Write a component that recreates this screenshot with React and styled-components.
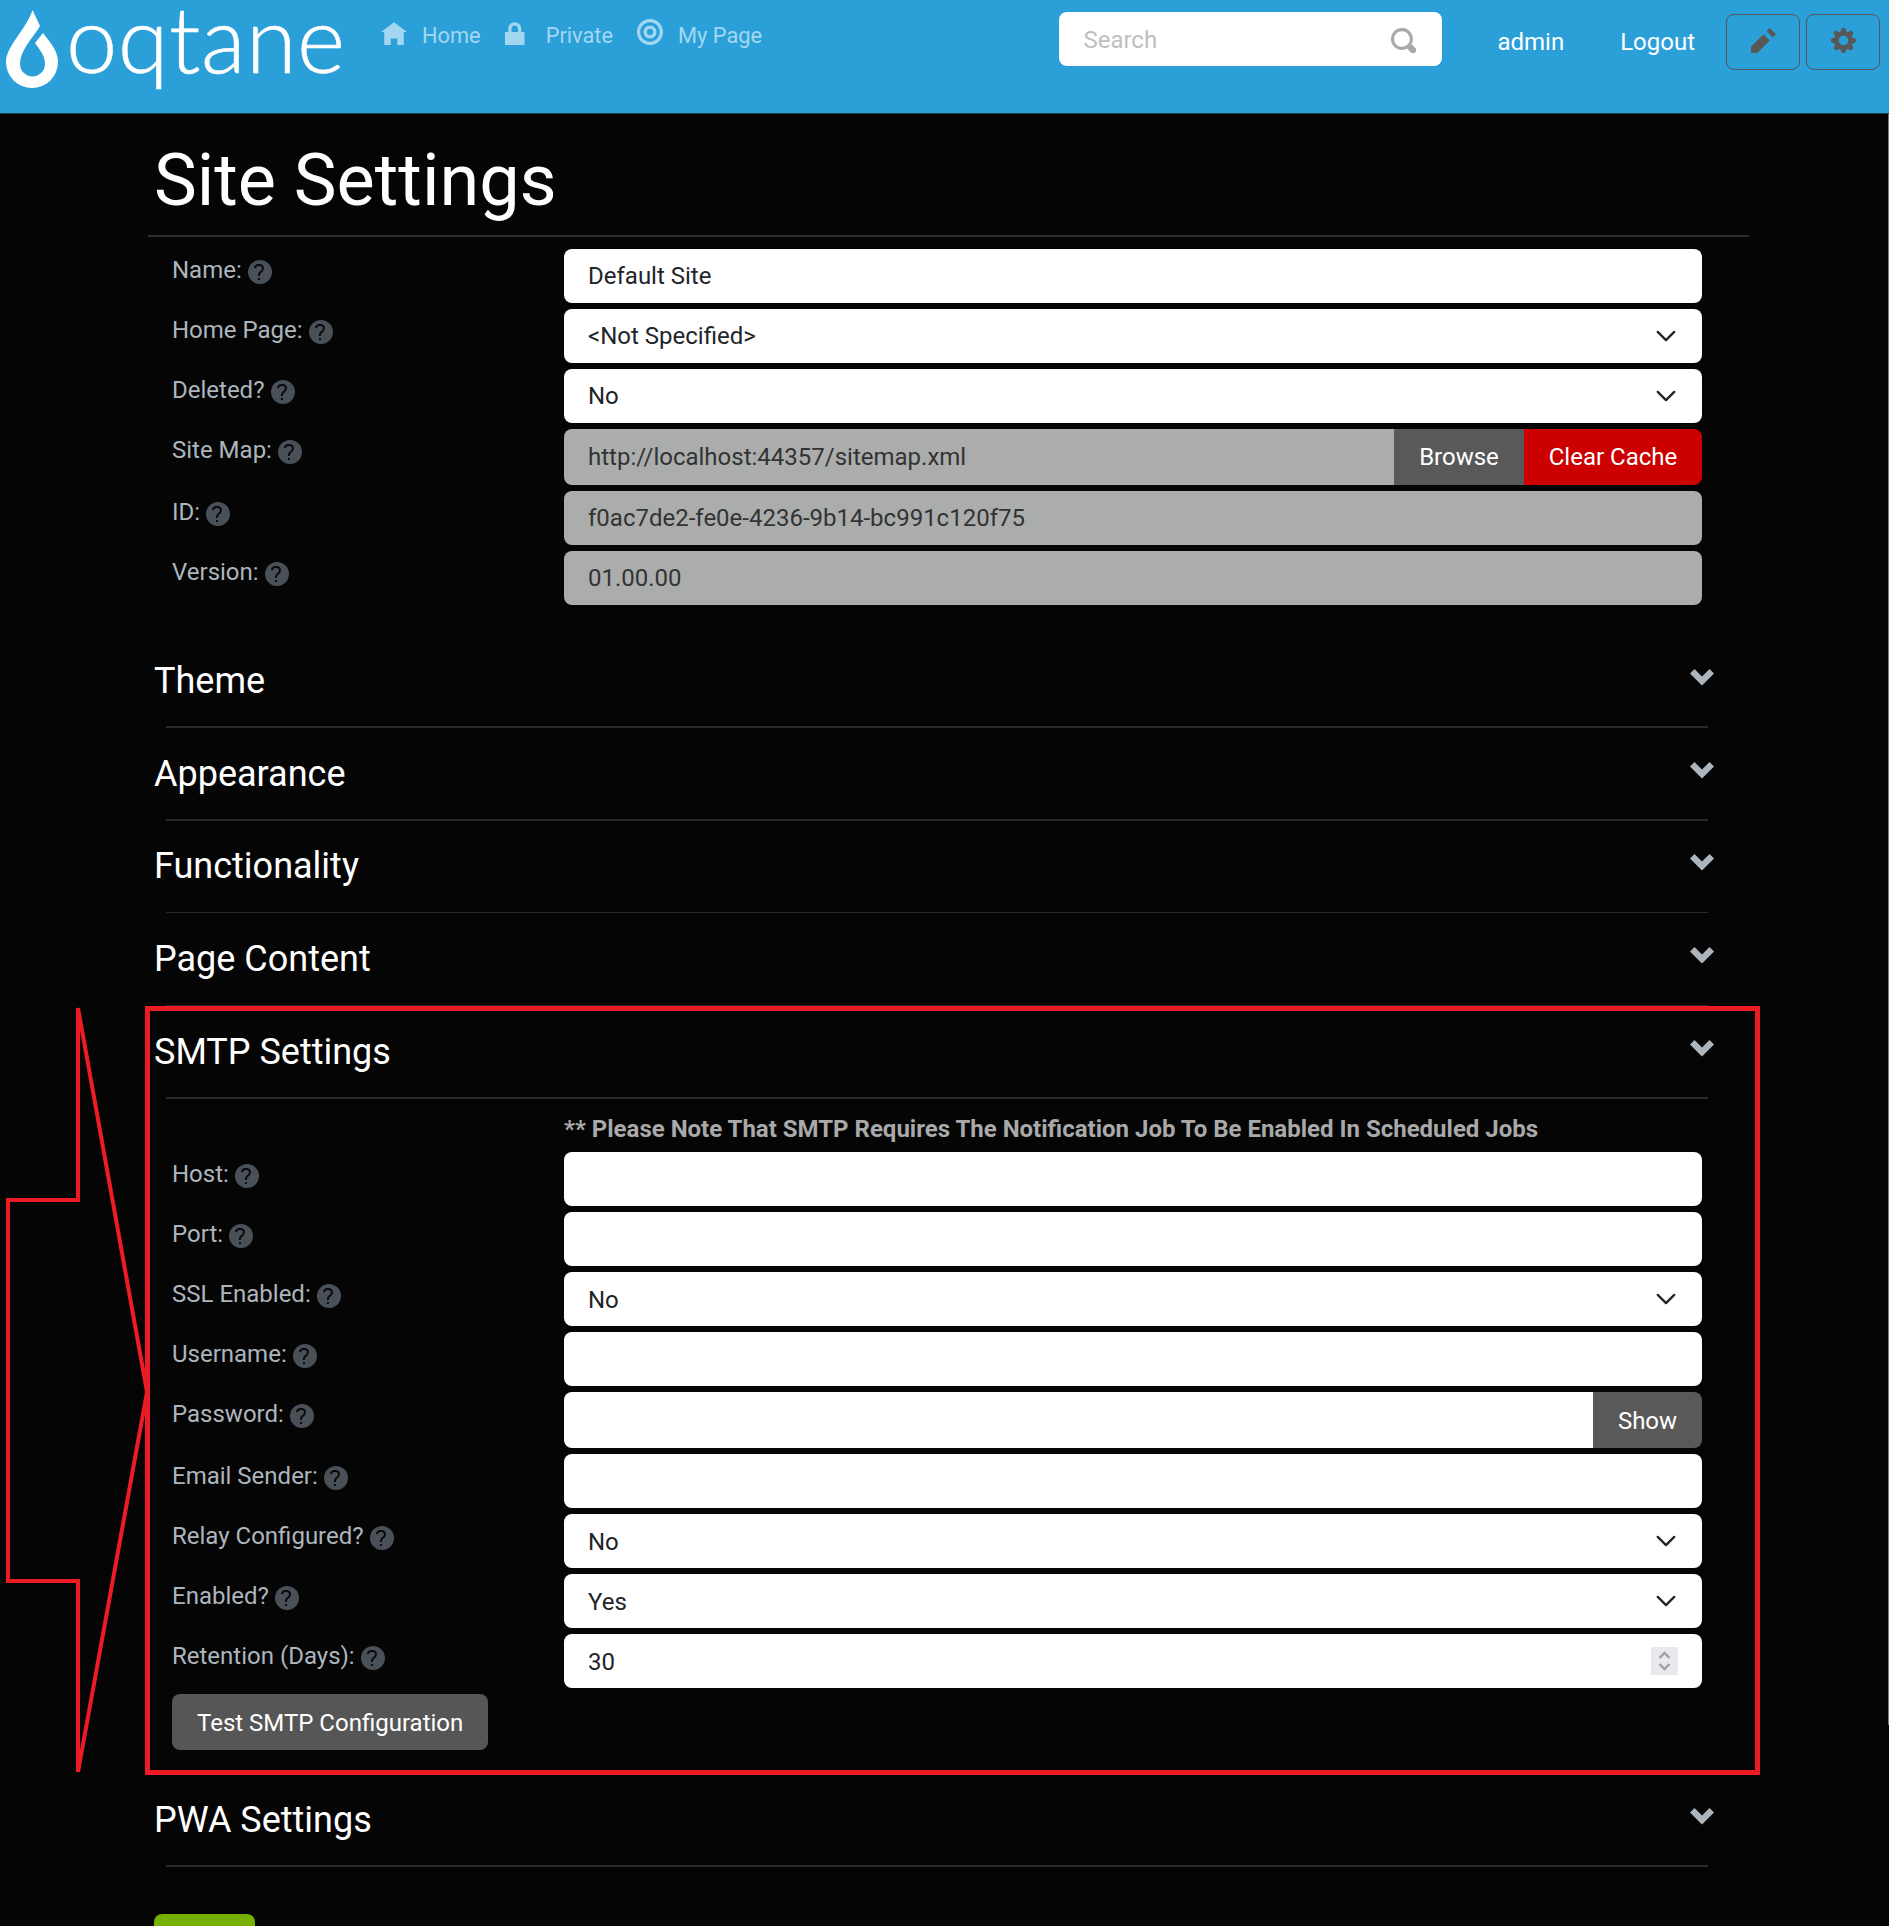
import styled, { createGlobalStyle } from 'styled-components';

const GlobalStyle = createGlobalStyle`
  html, body {
    margin: 0;
    padding: 0;
    height: 1926px;
    overflow: hidden;
    background: #050505;
  }
  * { box-sizing: border-box; }
  body {
    font-family: Roboto, "Liberation Sans", sans-serif;
    font-size: 24px;
    color: #212529;
  }
`;

const Page = styled.div`
  position: relative;
  height: 1926px;
  overflow: hidden;
  background: #050505;
`;

/* header */
const Header = styled.header`
  height: 114px;
  display: flex;
  align-items: flex-start;
  background: #2ba0d8;
  border-bottom: 1px solid #1d3a48;
  padding-right: 9px;
`;

const Logo = styled.a`
  width: 381px;
  flex: none;
  height: 113px;
  display: flex;
  align-items: flex-start;
  color: #fff;
`;

const LogoDrop = styled.svg`
  width: 66px;
  height: 100px;
  flex: none;
`;

const LogoWord = styled.span`
  font-family: Lato, sans-serif;
  font-weight: 300;
  font-size: 92px;
  line-height: 92px;
  letter-spacing: 0.5px;
  margin: -8px 0 0 0;
  -webkit-text-stroke: 0.6px #fff;
`;

const NavList = styled.nav`
  display: flex;
  gap: 24px;
  padding-top: 19px;
`;

const NavItem = styled.a`
  display: flex;
  align-items: flex-start;
  gap: 15px;
  color: #a3d7f1;
  font-size: 21.8px;
  line-height: 34px;
`;

const NavIcon = styled.svg`
  height: 26px;
  width: 26px;
  fill: #a3d7f1;
  flex: none;
`;

const SearchBox = styled.div`
  width: 383px;
  height: 54px;
  margin: 12px 0 0 auto;
  padding: 1px 26px 0 24px;
  background: #fff;
  border-radius: 8px;
  display: flex;
  align-items: center;
  justify-content: space-between;
  color: #bfbfbf;
`;

const SearchIcon = styled.svg`
  width: 25px;
  height: 25px;
  fill: #a9a9a9;
  margin-top: 2px;
`;

const UserLink = styled.a`
  color: #fff;
  line-height: 36px;
  margin-top: 24px;
  margin-left: ${({ $gap }) => $gap}px;
`;

const ToolButton = styled.button`
  width: 74px;
  height: 56px;
  margin-top: 14px;
  margin-left: ${({ $gap }) => $gap}px;
  padding: 0 0 4px;
  background: transparent;
  border: 1px solid #555;
  border-radius: 8px;
  display: flex;
  align-items: center;
  justify-content: center;
`;

const ToolIcon = styled.svg`
  width: 25px;
  height: 25px;
  fill: #585858;
`;

/* content */
const Main = styled.main`
  width: 1601px;
  margin-left: 148px;
`;

const Title = styled.h1`
  margin: 0;
  padding: 24px 0 11px 6px;
  font-size: 72px;
  font-weight: 400;
  line-height: 86.4px;
  color: #fff;
  border-bottom: 2px solid #2e2e2e;
`;

/* --text-shift moves the text of a form down inside its controls */
const Form = styled.div`
  --text-shift: ${({ $shift }) => $shift || 0}px;
  display: flex;
  flex-direction: column;
  gap: 6px;
  margin-left: 24px;
  padding-top: ${({ $top }) => $top}px;
`;

const Row = styled.div`
  display: grid;
  grid-template-columns: 392px 1138px;
  align-items: start;
`;

const Label = styled.label`
  display: flex;
  align-items: flex-start;
  gap: 6px;
  padding-top: calc(3px + var(--text-shift) / 2);
  line-height: 36px;
  color: #adb5bd;
`;

const HelpBadge = styled.span`
  width: 24px;
  height: 24px;
  margin-top: 8px;
  border-radius: 50%;
  background: #495057;
  display: flex;
  align-items: center;
  justify-content: center;
`;

const HelpGlyph = styled.svg`
  width: 12px;
  height: 16px;
  fill: #0a0a0a;
`;

const Field = styled.div`
  height: 54px;
  padding: var(--text-shift) 24px 0;
  display: flex;
  align-items: center;
  justify-content: space-between;
  border-radius: 8px;
  background: ${({ $disabled }) => ($disabled ? '#abadac' : '#fff')};
  color: ${({ $disabled }) => ($disabled ? '#333' : '#212529')};
`;

const SelectArrow = styled.svg`
  width: 22px;
  height: 22px;
  margin-right: 1px;
  margin-bottom: var(--text-shift);
  fill: none;
  stroke: #212529;
  stroke-width: 1.7;
  stroke-linecap: round;
  stroke-linejoin: round;
`;

const Spinner = styled.span`
  width: 27px;
  height: 28px;
  margin-bottom: var(--text-shift);
  background: #e9e9ed;
  display: flex;
  align-items: center;
  justify-content: center;
`;

const SpinnerGlyph = styled.svg`
  width: 13px;
  height: 22px;
  fill: none;
  stroke: #a09fa8;
  stroke-width: 2.4;
`;

const InputGroup = styled.div`
  display: flex;
  height: 56px;
  border-radius: 8px;
  overflow: hidden;
`;

const GroupField = styled(Field)`
  flex: 1;
  height: 100%;
  border-radius: 0;
`;

const GroupButton = styled.button`
  width: ${({ $w }) => $w}px;
  flex: none;
  border: 0;
  padding: var(--text-shift) 0 0;
  font: inherit;
  color: #fff;
  background: ${({ $danger }) => ($danger ? '#cc0000' : '#595959')};
`;

const Note = styled.div`
  grid-column: 2;
  padding-top: 1px;
  font-weight: 700;
  line-height: 34px;
  color: #a9a9a9;
`;

const TestButton = styled.button`
  align-self: flex-start;
  height: 56px;
  padding: var(--text-shift) 25px 0;
  border: 0;
  border-radius: 8px;
  font: inherit;
  color: #fff;
  background: #565656;
`;

const SectionHead = styled.div`
  height: 91.25px;
  padding: 0 35px 0 6px;
  display: flex;
  align-items: center;
  justify-content: space-between;
  font-size: 36px;
  color: #fff;
  margin-top: ${({ $top }) => $top || 0}px;
`;

const SectionArrow = styled.svg`
  width: 24px;
  height: 24px;
  fill: #adb5bd;
  margin-bottom: 6px;
`;

const SectionRule = styled.hr`
  height: 1.5px;
  margin: 0 41px 0 18px;
  border: 0;
  background: #2a2a2a;
`;

const SaveButton = styled.button`
  display: block;
  width: 101px;
  height: 56px;
  margin: 47.5px 0 0 6px;
  border: 0;
  border-radius: 8px;
  background: #78b000;
`;

/* red annotation drawn over the screenshot */
const RedBox = styled.div`
  position: absolute;
  left: 145px;
  top: 1006px;
  width: 1615px;
  height: 769px;
  border: 5px solid #ed1c24;
  pointer-events: none;
`;

const RedArrow = styled.svg`
  position: absolute;
  left: 0;
  top: 1000px;
  width: 160px;
  height: 780px;
  fill: none;
  stroke: #ed1c24;
  stroke-width: 4;
  pointer-events: none;
`;

const EdgeLine = styled.div`
  position: absolute;
  right: 0;
  top: 114px;
  width: 1px;
  height: 1611px;
  background: #777;
`;

const icons = {
  home: 'M4 0l-4 3h1v4h2v-2h2v2h2v-4.03l1 .03-4-3z',
  lock: 'M3 0c-1.1 0-2 .9-2 2v1h-1v4h6v-4h-1v-1c0-1.1-.9-2-2-2zm0 1c.56 0 1 .44 1 1v1h-2v-1c0-.56.44-1 1-1z',
  target: 'M4 0c-2.2 0-4 1.8-4 4s1.8 4 4 4 4-1.8 4-4-1.8-4-4-4zm0 1c1.66 0 3 1.34 3 3s-1.34 3-3 3-3-1.34-3-3 1.34-3 3-3zm0 1c-1.1 0-2 .9-2 2s.9 2 2 2 2-.9 2-2-.9-2-2-2zm0 1c.56 0 1 .44 1 1s-.44 1-1 1-1-.44-1-1 .44-1 1-1z',
  pencil: 'M6 0l-1 1 2 2 1-1-2-2zm-2 2l-4 4v2h2l4-4-2-2z',
  cog: 'M3.5 0l-.5 1.19c-.1.03-.19.08-.28.13l-1.19-.5-.72.72.5 1.19c-.05.1-.09.18-.13.28l-1.19.5v1l1.19.5c.04.1.08.18.13.28l-.5 1.19.72.72 1.19-.5c.09.04.18.09.28.13l.5 1.19h1l.5-1.19c.09-.04.19-.08.28-.13l1.19.5.72-.72-.5-1.19c.04-.09.09-.19.13-.28l1.19-.5v-1l-1.19-.5c-.03-.09-.08-.19-.13-.28l.5-1.19-.72-.72-1.19.5c-.09-.04-.19-.09-.28-.13l-.5-1.19h-1zm.5 2.5c.83 0 1.5.67 1.5 1.5s-.67 1.5-1.5 1.5-1.5-.67-1.5-1.5.67-1.5 1.5-1.5z',
  search: 'M3.5 0c-1.93 0-3.5 1.57-3.5 3.5s1.57 3.5 3.5 3.5c.59 0 1.17-.14 1.66-.41a1 1 0 0 0 .13.13l1 1a1.02 1.02 0 1 0 1.44-1.44l-1-1a1 1 0 0 0-.16-.13c.27-.49.44-1.06.44-1.66 0-1.93-1.57-3.5-3.5-3.5zm0 1c1.39 0 2.5 1.11 2.5 2.5 0 .66-.24 1.27-.66 1.72-.01.01-.02.02-.03.03a1 1 0 0 0-.13.13c-.44.4-1.04.63-1.69.63-1.39 0-2.5-1.11-2.5-2.5s1.11-2.5 2.5-2.5z',
  chevron: 'M1.5 1l-1.5 1.5 4 4 4-4-1.5-1.5-2.5 2.5-2.5-2.5z',
  question: 'M2.47 0c-.85 0-1.48.26-1.88.66-.4.4-.54.9-.59 1.28l1 .13c.04-.25.12-.5.31-.69.19-.19.49-.38 1.16-.38.66 0 1.02.16 1.22.34.2.18.28.4.28.66 0 .83-.34 1.06-.84 1.5-.5.44-1.16 1.08-1.16 2.25v.25h1v-.25c0-.83.31-1.06.81-1.5.5-.44 1.19-1.08 1.19-2.25 0-.48-.17-1.02-.59-1.41-.43-.39-1.07-.59-1.91-.59zm-.5 7v1h1v-1h-1z',
};

const navItems = [
  { label: 'Home', icon: 'home', box: '0 -1 8 8' },
  { label: 'Private', icon: 'lock', box: '0 -1 8 8' },
  { label: 'My Page', icon: 'target', box: '0 0 8 8' },
];

const siteRows = [
  { label: 'Name:', value: 'Default Site' },
  { label: 'Home Page:', value: '<Not Specified>', select: true },
  { label: 'Deleted?', value: 'No', select: true },
  { label: 'Site Map:', value: 'http://localhost:44357/sitemap.xml', group: [{ text: 'Browse', w: 130 }, { text: 'Clear Cache', w: 178, danger: true }], disabled: true },
  { label: 'ID:', value: 'f0ac7de2-fe0e-4236-9b14-bc991c120f75', disabled: true },
  { label: 'Version:', value: '01.00.00', disabled: true },
];

const smtpRows = [
  { label: 'Host:' },
  { label: 'Port:' },
  { label: 'SSL Enabled:', value: 'No', select: true },
  { label: 'Username:' },
  { label: 'Password:', group: [{ text: 'Show', w: 109 }] },
  { label: 'Email Sender:' },
  { label: 'Relay Configured?', value: 'No', select: true },
  { label: 'Enabled?', value: 'Yes', select: true },
  { label: 'Retention (Days):', value: '30', number: true },
];

const Help = () => (
  <HelpBadge>
    <HelpGlyph viewBox="0 0 6 8"><path d={icons.question} /></HelpGlyph>
  </HelpBadge>
);

const FormRow = ({ row }) => (
  <Row>
    <Label>{row.label}<Help /></Label>
    {row.group ? (
      <InputGroup>
        <GroupField $disabled={row.disabled}>{row.value}</GroupField>
        {row.group.map((b) => (
          <GroupButton key={b.text} $w={b.w} $danger={b.danger}>{b.text}</GroupButton>
        ))}
      </InputGroup>
    ) : (
      <Field $disabled={row.disabled}>
        <span>{row.value}</span>
        {row.select && (
          <SelectArrow viewBox="0 0 16 16"><path d="M2 5l6 6 6-6" /></SelectArrow>
        )}
        {row.number && (
          <Spinner>
            <SpinnerGlyph viewBox="0 0 13 22"><path d="M1.5 8l5-5 5 5M1.5 14l5 5 5-5" /></SpinnerGlyph>
          </Spinner>
        )}
      </Field>
    )}
  </Row>
);

const Section = ({ title, top }) => (
  <>
    <SectionHead $top={top}>
      <span>{title}</span>
      <SectionArrow viewBox="0 0 8 8"><path d={icons.chevron} /></SectionArrow>
    </SectionHead>
    <SectionRule />
  </>
);

const App = () => (
  <Page>
    <GlobalStyle />
    <Header>
      <Logo>
        <LogoDrop viewBox="0 0 66 100">
          <path fill="#fff" d="M32.500 10L40 26C33 38 20 50 20 64A12.500 12.500 0 0 0 45 64C45 55 39 49 35 43L43 33C50 42 58 51 58 62A26 26 0 0 1 6 62C6 46 26 30 32.500 10Z" />
        </LogoDrop>
        <LogoWord>oqtane</LogoWord>
      </Logo>
      <NavList>
        {navItems.map((item) => (
          <NavItem key={item.label}>
            <NavIcon viewBox={item.box}><path d={icons[item.icon]} /></NavIcon>
            {item.label}
          </NavItem>
        ))}
      </NavList>
      <SearchBox>
        Search
        <SearchIcon viewBox="0 0 8 8"><path d={icons.search} /></SearchIcon>
      </SearchBox>
      <UserLink $gap={55}>admin</UserLink>
      <UserLink $gap={56}>Logout</UserLink>
      <ToolButton $gap={31}>
        <ToolIcon viewBox="0 0 8 8"><path d={icons.pencil} /></ToolIcon>
      </ToolButton>
      <ToolButton $gap={6}>
        <ToolIcon viewBox="0 0 8 8"><path d={icons.cog} /></ToolIcon>
      </ToolButton>
    </Header>
    <Main>
      <Title>Site Settings</Title>
      <Form $top={12}>
        {siteRows.map((row) => <FormRow key={row.label} row={row} />)}
      </Form>
      <Section title="Theme" top={29.75} />
      <Section title="Appearance" />
      <Section title="Functionality" />
      <Section title="Page Content" />
      <Section title="SMTP Settings" />
      <Form $top={12.5} $shift={2}>
        <Row><Note>** Please Note That SMTP Requires The Notification Job To Be Enabled In Scheduled Jobs</Note></Row>
        {smtpRows.map((row) => <FormRow key={row.label} row={row} />)}
        <TestButton>Test SMTP Configuration</TestButton>
      </Form>
      <Section title="PWA Settings" top={23.75} />
      <SaveButton aria-label="Save" />
    </Main>
    <RedBox />
    <RedArrow viewBox="0 0 160 780">
      <path d="M78 8V200H8V581H78V772L147 392Z" />
    </RedArrow>
    <EdgeLine />
  </Page>
);

export default App;
